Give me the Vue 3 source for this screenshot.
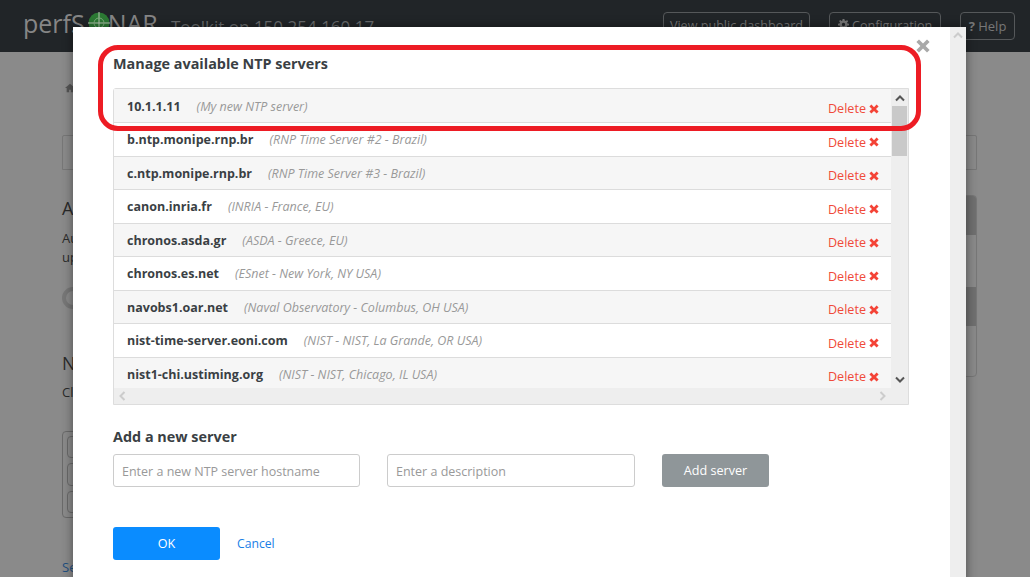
<script setup>
const servers = [
  { host: '10.1.1.11', desc: 'My new NTP server' },
  { host: 'b.ntp.monipe.rnp.br', desc: 'RNP Time Server #2 - Brazil' },
  { host: 'c.ntp.monipe.rnp.br', desc: 'RNP Time Server #3 - Brazil' },
  { host: 'canon.inria.fr', desc: 'INRIA - France, EU' },
  { host: 'chronos.asda.gr', desc: 'ASDA - Greece, EU' },
  { host: 'chronos.es.net', desc: 'ESnet - New York, NY USA' },
  { host: 'navobs1.oar.net', desc: 'Naval Observatory - Columbus, OH USA' },
  { host: 'nist-time-server.eoni.com', desc: 'NIST - NIST, La Grande, OR USA' },
  { host: 'nist1-chi.ustiming.org', desc: 'NIST - NIST, Chicago, IL USA' }
]
</script>

<template>
  <div class="page">
    <header class="topbar">
      <div class="logo">
        <span>perfS</span>
        <svg class="globe" viewBox="0 0 22 22" width="22" height="22">
          <circle cx="11" cy="11" r="10.5" fill="#2c7a34" />
          <path d="M11 0V22M0 11H22" stroke="#b9c7b4" stroke-width="1" />
          <circle cx="11" cy="11" r="5" fill="none" stroke="#7fae7f" stroke-width="1" />
        </svg>
        <span>NAR</span>
      </div>
      <div class="host">Toolkit on 150.254.160.17</div>
      <nav class="topnav">
        <a class="navbtn dash">View public dashboard</a>
        <a class="navbtn conf">
          <svg viewBox="0 0 12 12" width="11" height="11"><path d="M5 0H7L7.3 1.7 8.6 2.2 10 1.2 11 2.6 9.9 3.8 10.3 5 12 5.2V7L10.3 7.2 9.8 8.5 10.8 10 9.5 11 8.3 9.9 7.2 10.3 7 12H5L4.8 10.3 3.6 9.8 2.2 10.8 1.1 9.6 2.2 8.3 1.7 7.2 0 7V5.2L1.7 4.9 2.2 3.7 1.2 2.3 2.5 1.1 3.8 2.2 4.8 1.7Z M6 4.2A1.8 1.8 0 1 0 6 7.8 1.8 1.8 0 1 0 6 4.2Z" fill="#777" fill-rule="evenodd" /></svg>
          Configuration
        </a>
        <a class="navbtn help"><b>?</b> Help</a>
      </nav>
    </header>

    <main class="back">
      <div class="crumb">
        <svg class="home" viewBox="0 0 12 10" width="10" height="10"><path d="M6 0L12 5H10V10H7V7H5V10H2V5H0Z" fill="#555" /></svg>
      </div>
      <div class="tabs"></div>
      <div class="cols">
        <div class="leftcol">
          <h3 class="bh auto">Auto updates</h3>
          <p class="bp">Automatic updates keep the host<br />up to date</p>
          <div class="ring"></div>
          <h3 class="bh ntp">NTP servers</h3>
          <p class="bp close-text">Closest servers</p>
          <div class="ntpbox"><i></i><i></i><i></i></div>
          <a class="seelink">See all</a>
        </div>
        <aside class="panel">
          <div class="pdark"></div>
          <div class="plight"></div>
          <div class="pdark"></div>
          <div class="plight"></div>
        </aside>
      </div>
    </main>

    <section class="modal">
      <div class="mbody">
        <h2 class="mtitle">Manage available NTP servers</h2>
        <div class="listbox">
          <div class="listmain">
            <ul class="rows">
              <li v-for="s in servers" :key="s.host" class="row">
                <span class="hostname">{{ s.host }}</span>
                <span class="desc">({{ s.desc }})</span>
                <a class="del">Delete
                  <svg viewBox="0 0 10 10" width="10" height="10"><path d="M2.4 .6L5 3.2 7.6 .6 9.6 2.6 7 5 9.6 7.6 7.6 9.6 5 7 2.4 9.6 .4 7.6 3 5 .4 2.6Z" fill="#f44336" /></svg>
                </a>
              </li>
            </ul>
            <div class="vbar">
              <svg class="arrow" viewBox="0 0 10 7" width="10" height="7"><path d="M1 5.5L5 1.5 9 5.5" fill="none" stroke="#555" stroke-width="2" /></svg>
              <div class="thumb"></div>
              <svg class="arrow down" viewBox="0 0 10 7" width="10" height="7"><path d="M1 1.5L5 5.5 9 1.5" fill="none" stroke="#555" stroke-width="2" /></svg>
            </div>
          </div>
          <div class="hbar">
            <svg viewBox="0 0 7 10" width="7" height="10"><path d="M5.5 1L1.5 5 5.5 9" fill="none" stroke="#ccc" stroke-width="2" /></svg>
            <svg viewBox="0 0 7 10" width="7" height="10"><path d="M1.5 1L5.5 5 1.5 9" fill="none" stroke="#ccc" stroke-width="2" /></svg>
          </div>
        </div>
        <h3 class="addtitle">Add a new server</h3>
        <div class="addrow">
          <input class="field" placeholder="Enter a new NTP server hostname" />
          <input class="field second" placeholder="Enter a description" />
          <button class="addbtn">Add server</button>
        </div>
        <div class="actions">
          <button class="okbtn">OK</button>
          <a class="cancel">Cancel</a>
        </div>
      </div>
      <div class="outerbar">
        <svg viewBox="0 0 10 7" width="10" height="7"><path d="M1 5.5L5 1.5 9 5.5" fill="none" stroke="#ccc" stroke-width="2" /></svg>
      </div>
      <svg class="close" viewBox="0 0 14 14" width="14" height="14"><path d="M3 .4L7 4.4 11 .4 13.6 3 9.6 7 13.6 11 11 13.6 7 9.6 3 13.6 .4 11 4.4 7 .4 3Z" fill="#a9a9a9" /></svg>
    </section>

    <div class="callout"></div>
  </div>
</template>

<style>
html, body { margin: 0; overflow: hidden; }
</style>

<style scoped>
.page {
  position: relative;
  width: 1030px;
  height: 577px;
  overflow: hidden;
  background: #8a8a8a;
  font-family: "Open Sans", sans-serif;
  color: #333;
}
.topbar {
  height: 52px;
  background: #212528;
  display: flex;
  align-items: flex-start;
  box-sizing: border-box;
  padding: 12px 15px 0 23px;
}
.logo {
  display: flex;
  align-items: flex-start;
  height: 23px;
  font-size: 25px;
  line-height: 23px;
  color: #868686;
  width: 148px;
  flex: none;
}
.globe { margin: 0 -2px 0 3px; flex: none; }
.host { font-size: 17px; line-height: 30px; color: #686b6d; }
.topnav { margin-left: auto; display: flex; gap: 19px; }
.navbtn {
  box-sizing: border-box;
  height: 28px;
  border: 1px solid #55585a;
  border-radius: 4px;
  font-size: 12.6px;
  line-height: 26px;
  color: #777;
  text-align: center;
  white-space: nowrap;
}
.dash { width: 147px; }
.conf { width: 112px; }
.help { width: 55px; font-size: 13px; }
.back { padding: 0 53px 0 62px; }
.crumb { height: 83px; padding: 31px 0 0 3px; box-sizing: border-box; }
.home { display: block; }
.tabs { height: 35px; border: 1px solid #777; border-radius: 2px 2px 0 0; box-sizing: border-box; }
.cols { display: flex; padding-top: 25px; }
.leftcol { flex: 1; }
.bh { margin: 0; font-size: 18px; font-weight: 400; line-height: 26px; color: #2a2a2a; }
.bp { margin: 8px 0 0; font-size: 13px; line-height: 19px; color: #2a2a2a; }
.close-text { margin-top: 7px; }
.ring { width: 14px; height: 14px; border: 4px solid #777; border-radius: 50%; margin-top: 20px; }
.ntp { margin-top: 41px; }
.ntpbox {
  margin-top: 29px;
  width: 200px;
  height: 87px;
  box-sizing: border-box;
  border: 1px solid #6a6a6a;
  border-radius: 4px;
  padding: 4px;
  display: flex;
  flex-direction: column;
  gap: 5px;
}
.ntpbox i { display: block; height: 22px; border: 1px solid #6a6a6a; border-radius: 4px; }
.seelink { display: block; margin-top: 40px; font-size: 13px; color: #1f4f80; }
.panel {
  width: 300px;
  height: 182px;
  box-sizing: border-box;
  border: 1px solid #777;
  border-radius: 4px;
  overflow: hidden;
}
.pdark { height: 39px; background: #707070; }
.plight { height: 52px; }
.modal {
  position: absolute;
  left: 73px;
  top: 27px;
  width: 893px;
  height: 560px;
  background: #fff;
  display: flex;
  box-shadow: 0 0 10px rgba(0, 0, 0, .45);
}
.mbody { flex: 1; padding: 0 41px 0 40px; min-width: 0; }
.mtitle { margin: 27px 0 0; font-size: 14.4px; line-height: 20px; font-weight: 700; color: #3a3f44; }
.listbox {
  margin-top: 14px;
  width: 796px;
  height: 317px;
  box-sizing: border-box;
  border: 1px solid #ddd;
  border-radius: 3px 0 0 0;
  display: flex;
  flex-direction: column;
  background: #eee;
}
.listmain { display: flex; height: 299px; }
.rows { margin: 0; padding: .5px 0 0; list-style: none; flex: 1; min-width: 0; background: #f6f6f6; overflow: hidden; }
.row {
  height: 33.5px;
  box-sizing: border-box;
  border-bottom: 1px solid #dcdcdc;
  display: flex;
  align-items: center;
  padding: 1px 12px 0 13px;
  background: #fff;
  white-space: nowrap;
}
.row:nth-child(odd) { background: #f6f6f6; }
.hostname { font-size: 12.5px; font-weight: 700; color: #3a3f44; }
.desc { margin-left: 16px; font-size: 12.5px; font-style: italic; color: #999; }
.del {
  margin-left: auto;
  margin-top: 5px;
  font-size: 12.6px;
  color: #f04a3a;
  display: flex;
  align-items: center;
  gap: 3px;
}
.vbar { width: 17px; flex: none; background: #eee; display: flex; flex-direction: column; align-items: center; }
.arrow { margin-top: 6px; flex: none; }
.thumb { width: 15px; height: 50px; background: #c9c9c9; margin-top: 4px; }
.arrow.down { margin-top: auto; margin-bottom: 5px; }
.hbar { flex: 1; display: flex; justify-content: space-between; align-items: center; padding: 0 22px 0 5px; }
.addtitle { margin: 22px 0 0; font-size: 14.4px; line-height: 20px; font-weight: 700; color: #3a3f44; }
.addrow { display: flex; margin-top: 7px; }
.field {
  box-sizing: border-box;
  width: 247px;
  height: 33px;
  border: 1px solid #ccc;
  border-radius: 3px;
  padding: 1px 8px 0;
  font: 12.5px "Open Sans", sans-serif;
  color: #333;
  outline: none;
}
.field::placeholder { color: #999; opacity: 1; }
.second { margin-left: 27px; width: 248px; }
.addbtn {
  margin-left: 27px;
  width: 107px;
  height: 33px;
  border: 0;
  border-radius: 3px;
  background: #8f9699;
  color: #fff;
  font: 12.6px "Open Sans", sans-serif;
}
.actions { display: flex; align-items: center; margin-top: 40px; }
.okbtn {
  width: 107px;
  height: 33px;
  border: 0;
  border-radius: 3px;
  background: #0a8cff;
  color: #fff;
  font: 12.6px "Open Sans", sans-serif;
}
.cancel { margin: -1px 0 0 17px; font-size: 12.2px; color: #1a80e6; }
.outerbar { width: 16px; flex: none; background: #eee; display: flex; justify-content: center; align-items: flex-start; padding-top: 5px; box-sizing: border-box; }
.close { position: absolute; left: 843px; top: 12px; }
.callout {
  position: absolute;
  left: 98px;
  top: 45px;
  width: 823px;
  height: 86px;
  box-sizing: border-box;
  border: 5px solid #ed1c24;
  border-radius: 20px;
  pointer-events: none;
}
</style>
